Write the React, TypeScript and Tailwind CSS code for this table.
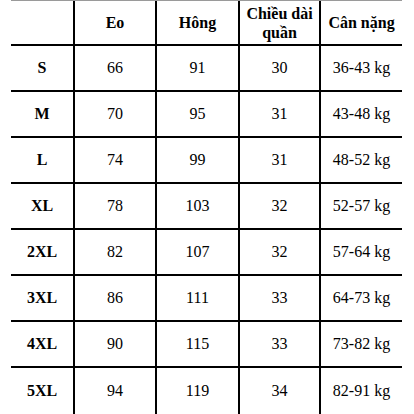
export default function App() {
  const head = ["", "Eo", "Hông", "Chiều dài quần", "Cân nặng"]
  const rows = [
    ["S", "66", "91", "30", "36-43 kg"],
    ["M", "70", "95", "31", "43-48 kg"],
    ["L", "74", "99", "31", "48-52 kg"],
    ["XL", "78", "103", "32", "52-57 kg"],
    ["2XL", "82", "107", "32", "57-64 kg"],
    ["3XL", "86", "111", "33", "64-73 kg"],
    ["4XL", "90", "115", "33", "73-82 kg"],
    ["5XL", "94", "119", "34", "82-91 kg"],
  ]

  return (
    <div className="w-[414px] h-[414px] bg-white overflow-hidden [font-family:'Liberation_Serif',serif] text-[16px] text-black">
      <div className="ml-[11px] w-[391px] border-t border-[#9a9a9a] grid grid-cols-[64px_82px_83px_81px_81px]">
        {head.map((h, i) => (
          <div
            key={"h" + i}
            className={`h-[45px] flex items-center justify-center text-center font-bold leading-[19px] border-b-2 border-black ${i < 4 ? "border-r-2" : ""} ${i === 3 ? "px-[4px]" : ""}`}
          >
            {h}
          </div>
        ))}
        {rows.map((r, ri) =>
          r.map((c, ci) => (
            <div
              key={ri + "-" + ci}
              className={`h-[46px] flex items-center justify-center border-black ${ci < 4 ? "border-r-2" : ""} ${ri < rows.length - 1 ? "border-b-2" : ""} ${ci === 0 ? "font-bold" : ""}`}
            >
              {c}
            </div>
          ))
        )}
      </div>
    </div>
  )
}
